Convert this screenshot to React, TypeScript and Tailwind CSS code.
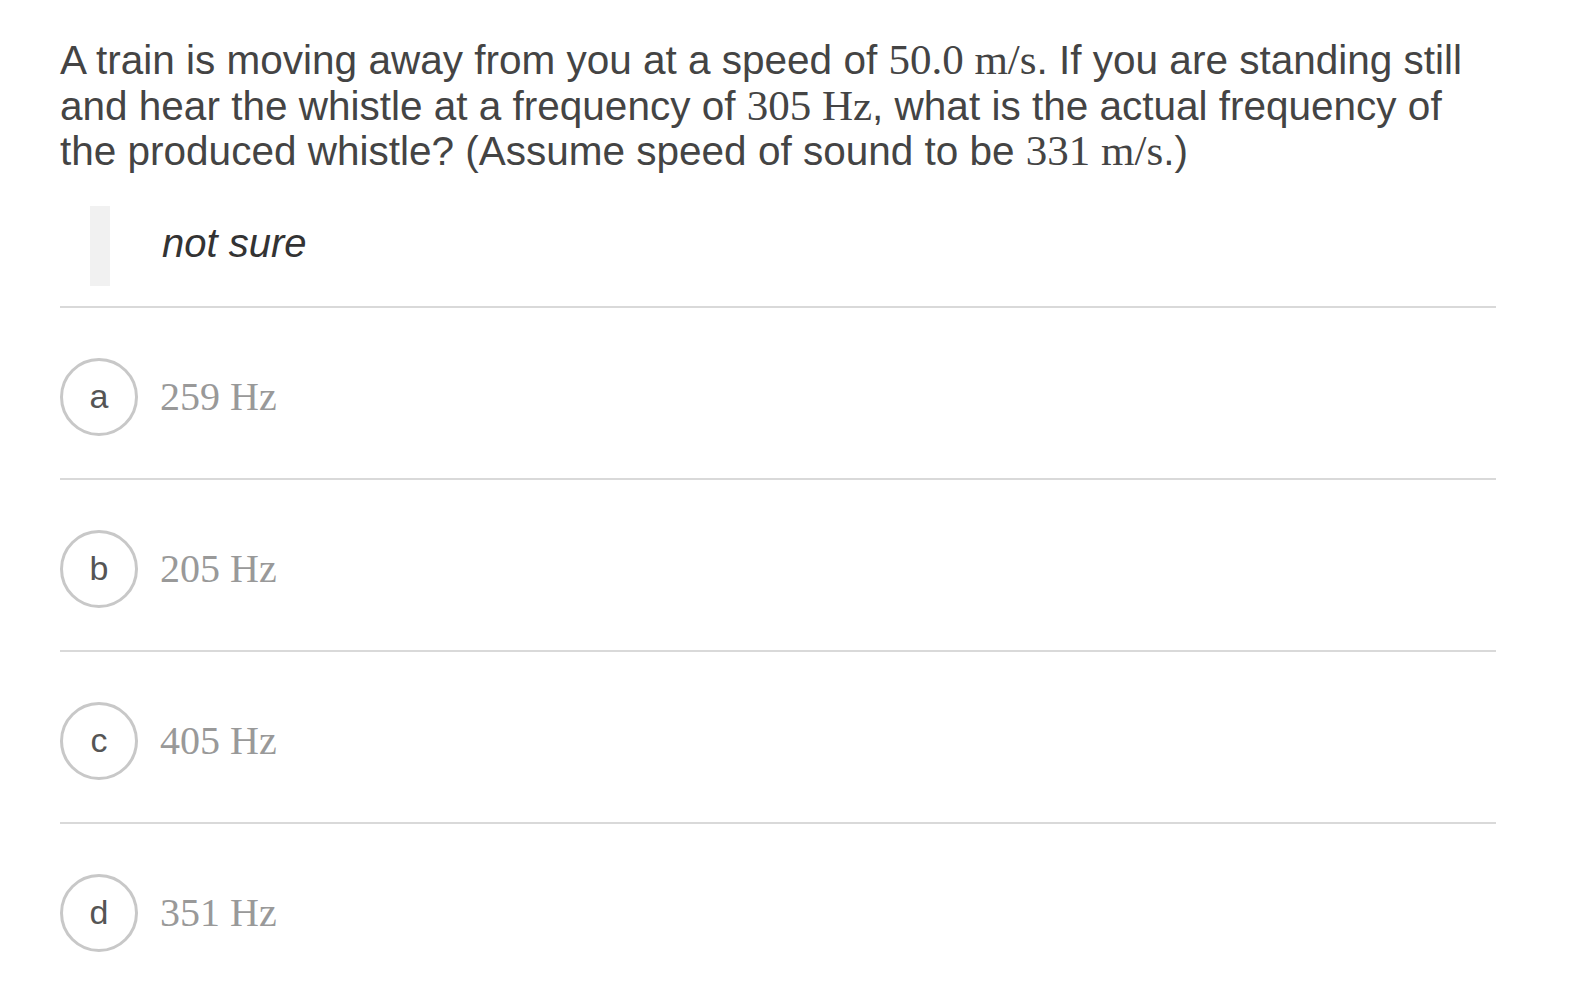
const OPTIONS = [
  { key: 'a', value: '259 Hz' },
  { key: 'b', value: '205 Hz' },
  { key: 'c', value: '405 Hz' },
  { key: 'd', value: '351 Hz' },
];

function M({ children }: { children: React.ReactNode }) {
  return (
    <span className="font-['Liberation_Serif',serif] text-[43px] leading-none">{children}</span>
  );
}

function Option({ letter, value }: { letter: string; value: string }) {
  return (
    <div className="flex items-center border-t-2 border-[#d9d9d9] pt-[50px] pb-[42px]">
      <div className="flex h-[78px] w-[78px] shrink-0 items-center justify-center rounded-full border-[3px] border-[#c8c8c8] text-[34px] text-[#555]">
        {letter}
      </div>
      <div className="ml-[22px] font-['Liberation_Serif',serif] text-[40px] leading-none text-[#999]">
        {value}
      </div>
    </div>
  );
}

export default function App() {
  return (
    <div className="min-h-screen bg-white font-['Liberation_Sans',Arial,sans-serif]">
      <div className="w-[1436px] ml-[60px] pt-[38px]">
        <p className="text-[40.5px] leading-[45.5px] text-[#444]">
          A train is moving away from you at a speed of <M>50.0 m/s</M>. If you are standing still
          and hear the whistle at a frequency of <M>305 Hz</M>, what is the actual frequency of
          the produced whistle? (Assume speed of sound to be <M>331 m/s</M>.)
        </p>

        <div className="mt-[31px] ml-[30px] flex h-[80px] items-center border-l-[20px] border-[#f1f1f1] pl-[52px] pb-[6px]">
          <span className="text-[40px] italic text-[#333]">not sure</span>
        </div>

        <div className="mt-[20px]">
          {OPTIONS.map((o) => (
            <Option key={o.key} letter={o.key} value={o.value} />
          ))}
        </div>
      </div>
    </div>
  );
}
